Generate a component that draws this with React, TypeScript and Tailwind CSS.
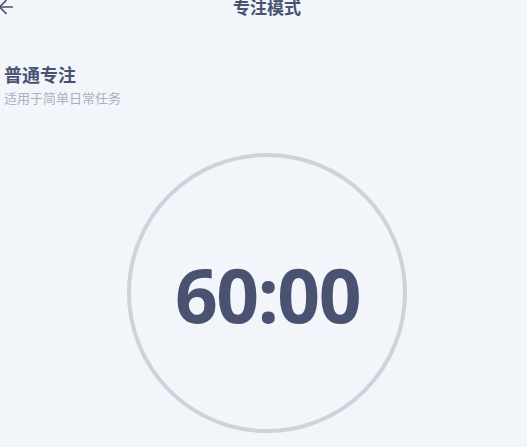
import { ArrowLeft } from "lucide-react";

export default function App() {
  return (
    <div className="w-full h-[447px] overflow-hidden bg-[#f2f5f9] font-['Noto_Sans_CJK_SC','Noto_Sans',sans-serif] text-[#4a5272]">
      <div className="w-[534px]">
        {/* header */}
        <div className="-mt-[10px] h-[34px] grid grid-cols-[1fr_auto_1fr] items-center">
          <div className="flex items-center">
            <ArrowLeft className="-ml-[5px] w-[22px] h-[22px] text-[#4a5272]" strokeWidth={1.8} />
          </div>
          <h1 className="text-[17px] font-bold leading-[34px]">专注模式</h1>
          <div />
        </div>

        <div className="pl-[4px]">
          <h2 className="mt-[37px] text-[18px] font-bold leading-[26px]">普通专注</h2>
          <p className="mt-[2px] text-[13px] leading-[18px] text-[#adb1bf]">适用于简单日常任务</p>
        </div>

        <div className="mt-[46px] mx-auto w-[280px] h-[280px] rounded-full border-4 border-[#cfd2db] flex items-center justify-center">
          <span className="pt-[3px] pl-[1px] font-['Noto_Sans',sans-serif] text-[75px] font-bold leading-none tracking-[-1.5px]">60:00</span>
        </div>
      </div>
    </div>
  );
}
